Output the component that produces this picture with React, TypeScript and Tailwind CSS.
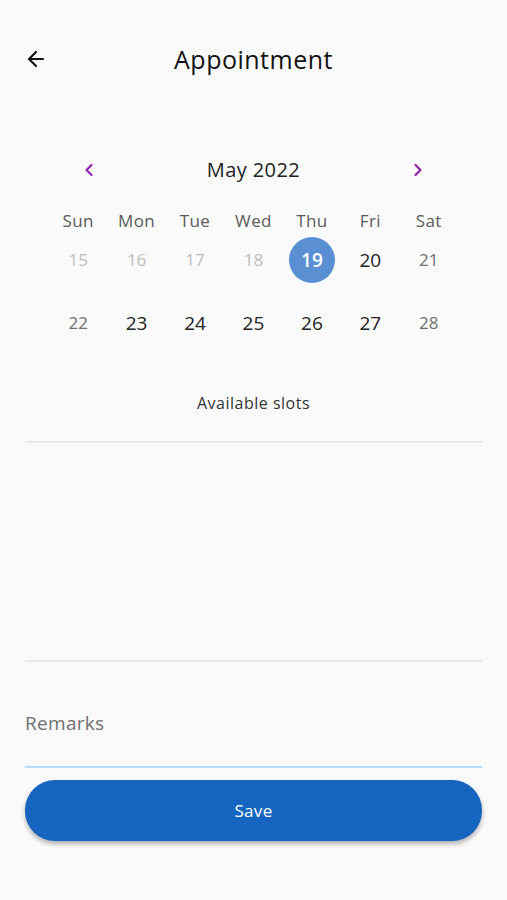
import { ArrowLeft, ChevronLeft, ChevronRight } from 'lucide-react';

const weekDays = ['Sun', 'Mon', 'Tue', 'Wed', 'Thu', 'Fri', 'Sat'];

type Day = { n: number; kind: 'past' | 'weekend' | 'normal' | 'selected' };

const weeks: Day[][] = [
  [
    { n: 15, kind: 'past' },
    { n: 16, kind: 'past' },
    { n: 17, kind: 'past' },
    { n: 18, kind: 'past' },
    { n: 19, kind: 'selected' },
    { n: 20, kind: 'normal' },
    { n: 21, kind: 'weekend' },
  ],
  [
    { n: 22, kind: 'weekend' },
    { n: 23, kind: 'normal' },
    { n: 24, kind: 'normal' },
    { n: 25, kind: 'normal' },
    { n: 26, kind: 'normal' },
    { n: 27, kind: 'normal' },
    { n: 28, kind: 'weekend' },
  ],
];

const dayClass = {
  past: 'text-[#bdbdbd] text-[17px]',
  weekend: 'text-[#6f6f6f] text-[17px]',
  normal: 'text-[#222] text-[19px]',
  selected: 'bg-[#5b8fd3] text-white font-semibold text-[19px]',
};

const App = () => {
  return (
    <div
      className="min-h-[900px] w-full bg-[#fafafa] flex flex-col"
      style={{ fontFamily: '"Open Sans", "Noto Sans", sans-serif' }}
    >
      {/* header */}
      <div className="h-[120px] pt-[37px] px-[24px] flex items-start">
        <div className="w-[44px] h-[44px] flex items-center">
          <ArrowLeft size={24} strokeWidth={2.2} className="text-[#111]" />
        </div>
        <div className="flex-1 text-center text-[25px] text-[#111] tracking-[0.5px] leading-[44px] mr-[44px]">
          Appointment
        </div>
      </div>

      {/* calendar */}
      <div className="mt-[30px] px-[49px]">
        <div className="flex items-center justify-between px-[30px] h-[40px]">
          <ChevronLeft size={20} strokeWidth={2.6} className="text-[#8e24aa]" />
          <div className="text-[20px] text-[#222] tracking-[0.4px]">May 2022</div>
          <ChevronRight size={20} strokeWidth={2.6} className="text-[#8e24aa]" />
        </div>
        <div className="grid grid-cols-7 mt-[20px]">
          {weekDays.map((d) => (
            <div key={d} className="text-center text-[17px] text-[#5a5a5a] tracking-[0.4px] h-[22px] leading-[22px]">
              {d}
            </div>
          ))}
        </div>
        <div className="mt-[5px] flex flex-col gap-[17px]">
          {weeks.map((w, i) => (
            <div key={i} className="grid grid-cols-7">
              {w.map((d) => (
                <div key={d.n} className="flex justify-center">
                  <div
                    className={`w-[46px] h-[46px] rounded-full flex items-center justify-center ${dayClass[d.kind]}`}
                  >
                    {d.n}
                  </div>
                </div>
              ))}
            </div>
          ))}
        </div>
      </div>

      {/* slots */}
      <div className="mt-[45px] text-center text-[16px] text-[#333] tracking-[0.5px] leading-[24px]">
        Available slots
      </div>
      <div className="mx-[25px] mt-[26px] h-[221px] border-t-2 border-b-2 border-[#e8e8e8]" />

      {/* remarks */}
      <div className="mx-[25px] mt-[47px] pb-[29px] text-[19px] text-[#707070] tracking-[0.3px] leading-[28px]">
        Remarks
      </div>
      <div className="mx-[25px] h-[2px] bg-[#b6dcfb]" />

      <button
        type="button"
        className="mx-[25px] mt-[12px] h-[61px] rounded-[30px] bg-[#1565c0] text-white text-[17px] tracking-[0.3px] shadow-[0_3px_5px_rgba(0,0,0,0.3)]"
      >
        Save
      </button>
    </div>
  );
};

export default App;
